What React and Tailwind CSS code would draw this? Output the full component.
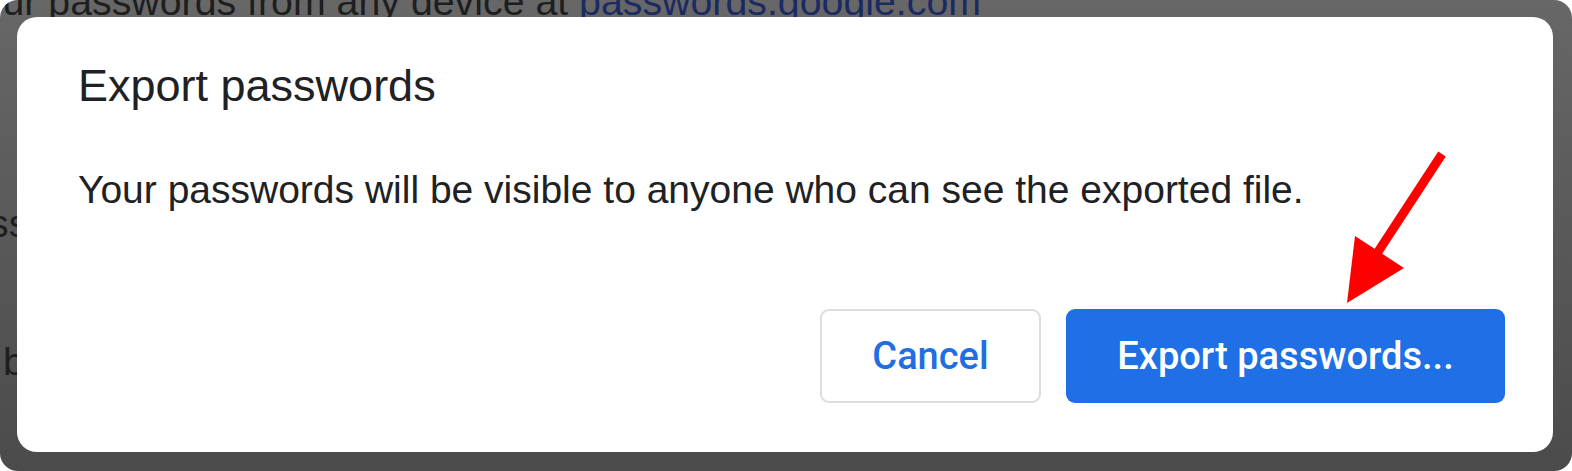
import React from 'react';

const sans = { fontFamily: '"Liberation Sans", Arial, sans-serif' };
const btn = { fontFamily: 'Roboto, "Liberation Sans", sans-serif' };

function PageBehind({ children }) {
  return <div className="whitespace-nowrap text-[39.3px] leading-none text-[#1e1e1e]" style={sans}>{children}</div>;
}

export default function App() {
  return (
    <div className="w-[1572px] h-[471px] bg-white">
      <div className="relative w-[1572px] h-[471px] rounded-[18px] overflow-hidden bg-gradient-to-b from-[#676767] to-[#4b4b4b] flex flex-col">
        {/* page under the overlay, top line */}
        <div className="h-[17px] overflow-hidden shrink-0">
          <div className="-mt-[18px] -ml-[39px]">
            <PageBehind>
              your passwords from any device at <span className="text-[#1b2a63]">passwords.google.com</span>
            </PageBehind>
          </div>
        </div>

        <div className="flex h-[435px] shrink-0">
          {/* left strip with cut-off page text */}
          <div className="w-[17px] overflow-hidden shrink-0">
            <div className="mt-[187px] -ml-[11px]">
              <PageBehind>sswords</PageBehind>
            </div>
            <div className="mt-[99px] ml-[3px]">
              <PageBehind>b</PageBehind>
            </div>
          </div>

          {/* dialog */}
          <div className="w-[1536px] h-[435px] bg-white rounded-[20px] flex flex-col pl-[61px] pt-[46px] pr-[48px] pb-[49px]">
            <h2 className="text-[45px] leading-none text-[#202124] h-[45px]" style={sans}>Export passwords</h2>
            <p className="mt-[62px] text-[39px] leading-none text-[#202124]" style={sans}>
              Your passwords will be visible to anyone who can see the exported file.
            </p>
            <div className="mt-auto flex justify-end gap-[25px]">
              <button
                className="w-[221px] h-[94px] rounded-[9px] border-2 border-[#dcdde0] bg-white text-[#1f6fe3] text-[38px] font-medium"
                style={btn}
              >
                Cancel
              </button>
              <button
                className="w-[439px] h-[94px] rounded-[9px] bg-[#1f6fe6] text-white text-[38px] font-medium"
                style={btn}
              >
                Export passwords...
              </button>
            </div>
          </div>

          <div className="flex-1" />
        </div>

        <div className="flex-1" />

        {/* red annotation arrow */}
        <svg className="absolute inset-0 pointer-events-none" width="1572" height="471" viewBox="0 0 1572 471">
          <line x1="1442" y1="154" x2="1374" y2="258" stroke="#ff0000" strokeWidth="9" />
          <polygon points="1355,236 1404,268 1347,303" fill="#ff0000" />
        </svg>
      </div>
    </div>
  );
}
